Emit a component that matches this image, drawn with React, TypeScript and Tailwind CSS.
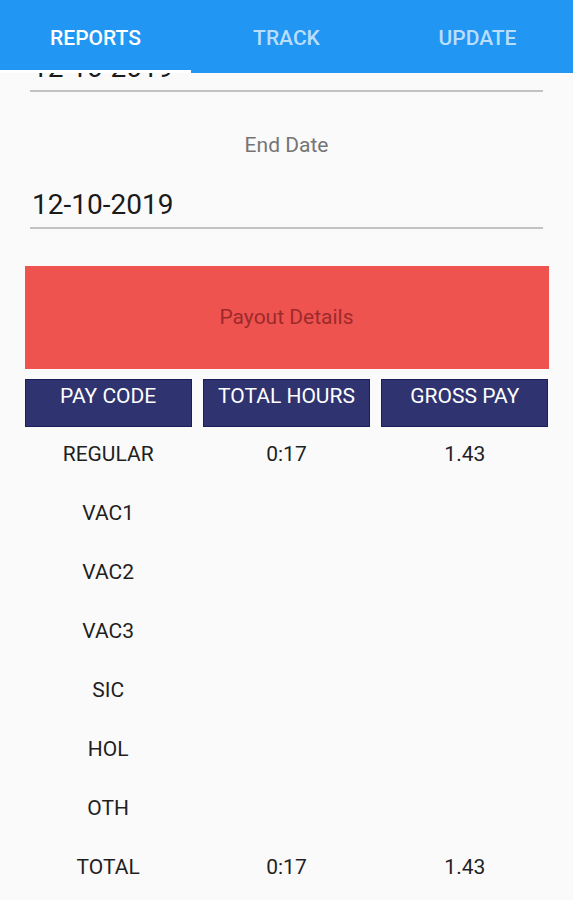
import React from "react";

const rows: [string, string, string][] = [
  ["REGULAR", "0:17", "1.43"],
  ["VAC1", "", ""],
  ["VAC2", "", ""],
  ["VAC3", "", ""],
  ["SIC", "", ""],
  ["HOL", "", ""],
  ["OTH", "", ""],
  ["TOTAL", "0:17", "1.43"],
];

const DateField: React.FC<{ label: string; value: string }> = ({ label, value }) => (
  <div className="px-[30px]">
    <div className="h-[24px] text-center text-[21px] leading-[24px] text-[#757575]">{label}</div>
    <div className="mt-[34px] border-b-2 border-[#c2c2c2] pb-[8px] pl-[2px] text-[28px] leading-[28px] text-[#1a1a1a]">
      {value}
    </div>
  </div>
);

const App: React.FC = () => {
  return (
    <div className="min-h-screen w-full bg-[#fafafa] font-['Roboto',sans-serif]">
      <div className="sticky top-0 z-10 flex h-[73px] bg-[#2196f3]">
        <div className="flex w-[191px] flex-col">
          <div className="flex flex-1 items-center justify-center pt-[7px] text-[21px] font-medium text-white">
            REPORTS
          </div>
          <div className="h-[3px] bg-white" />
        </div>
        <div className="flex w-[191px] items-center justify-center pt-[7px] pb-[3px] text-[21px] font-medium text-white/70">
          TRACK
        </div>
        <div className="flex w-[191px] items-center justify-center pt-[7px] pb-[3px] text-[21px] font-medium text-white/70">
          UPDATE
        </div>
      </div>

      <div className="-mt-[77px]">
        <DateField label="" value="12-10-2019" />
        <div className="mt-[41px]">
          <DateField label="End Date" value="12-10-2019" />
        </div>

        <div className="mx-auto mt-[37px] flex h-[103px] w-[524px] items-center justify-center bg-[#ef5350] text-[21px] text-[#9e2a2b]">
          Payout Details
        </div>

        <div className="mx-auto mt-[10px] grid w-[524px] grid-cols-3 gap-[11px]">
          {["PAY CODE", "TOTAL HOURS", "GROSS PAY"].map((h) => (
            <div
              key={h}
              className="h-[48px] border border-[#1b1e5c] bg-[#2f3470] pt-[3px] text-center text-[21px] leading-[26px] text-white"
            >
              {h}
            </div>
          ))}
        </div>

        <div className="mx-auto -mt-[2px] w-[524px]">
          {rows.map(([code, hours, pay]) => (
            <div key={code} className="grid h-[59px] grid-cols-3 gap-[11px] text-[21px] text-[#1f1f1f]">
              <div className="flex items-center justify-center">{code}</div>
              <div className="flex items-center justify-center">{hours}</div>
              <div className="flex items-center justify-center">{pay}</div>
            </div>
          ))}
        </div>
      </div>
    </div>
  );
};

export default App;
